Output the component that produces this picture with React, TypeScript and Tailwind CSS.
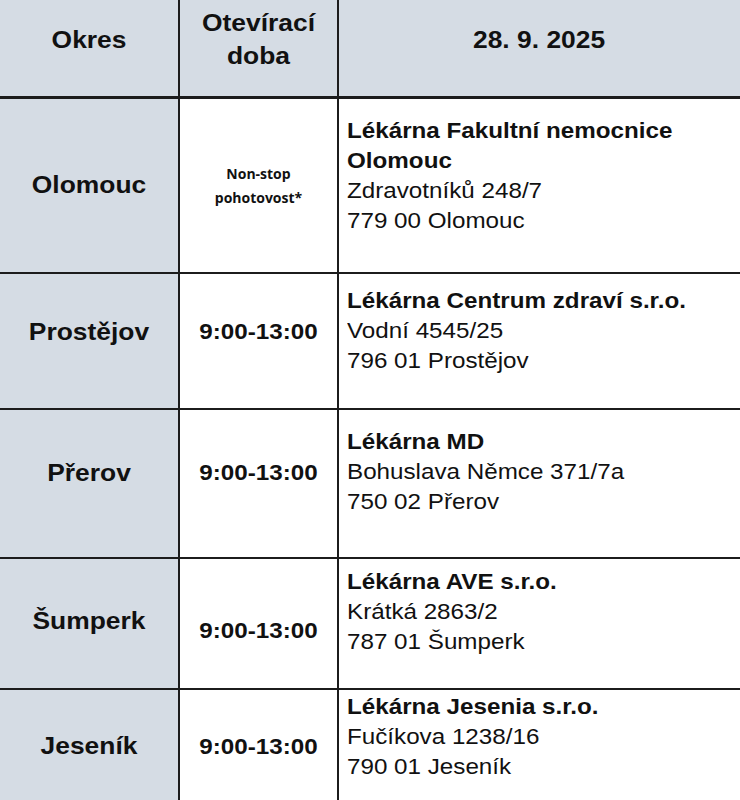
import React from 'react';

type Row = {
    okres: string;
    time: string;
    name: string[];
    street: string;
    city: string;
    rowH: string;
    leftPt: string;
    timePt: string;
    rightPt: string;
};

const rows: Row[] = [
    {
        okres: 'Olomouc',
        time: '',
        name: ['Lékárna Fakultní nemocnice', 'Olomouc'],
        street: 'Zdravotníků 248/7',
        city: '779 00 Olomouc',
        rowH: 'h-[175px]',
        leftPt: 'pt-[71px]',
        timePt: 'pt-[63px]',
        rightPt: 'pt-[17px]',
    },
    {
        okres: 'Prostějov',
        time: '9:00-13:00',
        name: ['Lékárna Centrum zdraví s.r.o.'],
        street: 'Vodní 4545/25',
        city: '796 01 Prostějov',
        rowH: 'h-[136px]',
        leftPt: 'pt-[43px]',
        timePt: 'pt-[43px]',
        rightPt: 'pt-[12px]',
    },
    {
        okres: 'Přerov',
        time: '9:00-13:00',
        name: ['Lékárna MD'],
        street: 'Bohuslava Němce 371/7a',
        city: '750 02 Přerov',
        rowH: 'h-[149px]',
        leftPt: 'pt-[48px]',
        timePt: 'pt-[48px]',
        rightPt: 'pt-[17px]',
    },
    {
        okres: 'Šumperk',
        time: '9:00-13:00',
        name: ['Lékárna AVE s.r.o.'],
        street: 'Krátká 2863/2',
        city: '787 01 Šumperk',
        rowH: 'h-[131px]',
        leftPt: 'pt-[47px]',
        timePt: 'pt-[57px]',
        rightPt: 'pt-[8px]',
    },
    {
        okres: 'Jeseník',
        time: '9:00-13:00',
        name: ['Lékárna Jesenia s.r.o.'],
        street: 'Fučíkova 1238/16',
        city: '790 01 Jeseník',
        rowH: 'h-[130px]',
        leftPt: 'pt-[41px]',
        timePt: 'pt-[42px]',
        rightPt: 'pt-[2px]',
    },
];

const App: React.FC = () => {
    return (
        <div className="h-[800px] w-[740px] overflow-hidden bg-white text-[#111] font-['Liberation_Sans',Arial,sans-serif]">
            {/* header */}
            <div className="grid grid-cols-[180px_159px_1fr] h-[99px] bg-[#d5dce4] border-b-[3px] border-[#1c1c1c]">
                <div className="border-r-2 border-[#1c1c1c] flex items-center justify-center pb-[16px]">
                    <div className="scale-x-110 text-[24px] font-bold leading-[30px]">Okres</div>
                </div>
                <div className="border-r-2 border-[#1c1c1c] pt-[6px]">
                    <div className="scale-x-110 text-center text-[24px] font-bold leading-[33px]">
                        Otevírací
                        <br />
                        doba
                    </div>
                </div>
                <div className="flex items-center justify-center pb-[16px]">
                    <div className="scale-x-110 text-[24px] font-bold leading-[30px]">28. 9. 2025</div>
                </div>
            </div>

            {rows.map((r) => (
                <div key={r.okres} className={`grid grid-cols-[180px_159px_1fr] border-b-2 border-[#1c1c1c] ${r.rowH}`}>
                    <div className={`bg-[#d5dce4] border-r-2 border-[#1c1c1c] ${r.leftPt}`}>
                        <div className="scale-x-110 text-center text-[24px] font-bold leading-[30px]">{r.okres}</div>
                    </div>
                    <div className={`border-r-2 border-[#1c1c1c] ${r.timePt}`}>
                        {r.time ? (
                            <div className="scale-x-110 text-center text-[22px] font-bold leading-[30px]">{r.time}</div>
                        ) : (
                            <div className="text-center text-[14px] font-bold leading-[24px] font-['Open_Sans','Noto_Sans',sans-serif]">
                                Non-stop
                                <br />
                                pohotovost*
                            </div>
                        )}
                    </div>
                    <div className={`pl-2 ${r.rightPt}`}>
                        <div className="scale-x-110 origin-left text-[22px] leading-[30px] whitespace-nowrap">
                            {r.name.map((n) => (
                                <div key={n} className="font-bold">{n}</div>
                            ))}
                            <div>{r.street}</div>
                            <div>{r.city}</div>
                        </div>
                    </div>
                </div>
            ))}
        </div>
    );
};

export default App;
